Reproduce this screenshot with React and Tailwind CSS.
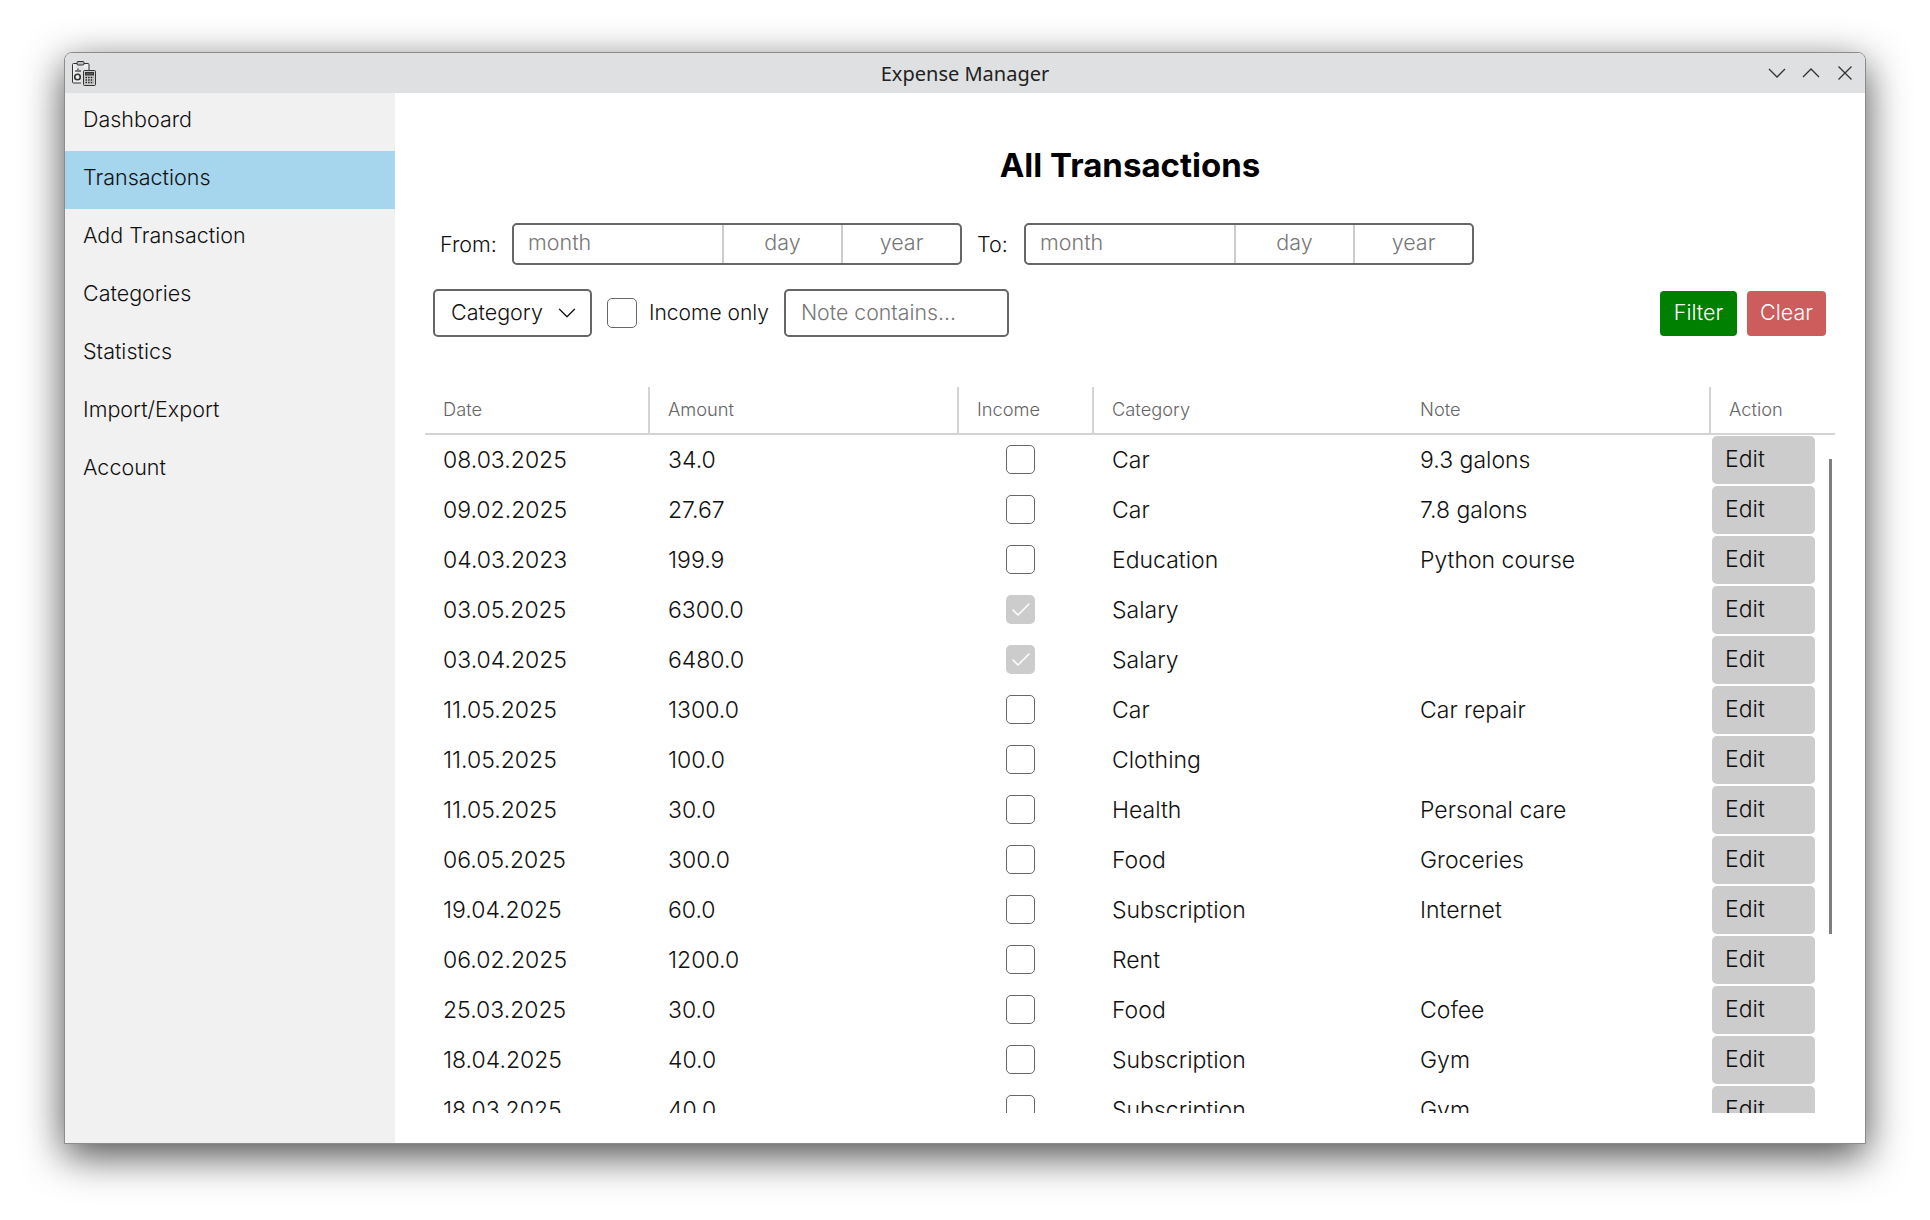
import { Check, ChevronDown } from 'lucide-react'

const navItems = ['Dashboard', 'Transactions', 'Add Transaction', 'Categories', 'Statistics', 'Import/Export', 'Account']

const rows = [
  ['08.03.2025', '34.0', false, 'Car', '9.3 galons'],
  ['09.02.2025', '27.67', false, 'Car', '7.8 galons'],
  ['04.03.2023', '199.9', false, 'Education', 'Python course'],
  ['03.05.2025', '6300.0', true, 'Salary', ''],
  ['03.04.2025', '6480.0', true, 'Salary', ''],
  ['11.05.2025', '1300.0', false, 'Car', 'Car repair'],
  ['11.05.2025', '100.0', false, 'Clothing', ''],
  ['11.05.2025', '30.0', false, 'Health', 'Personal care'],
  ['06.05.2025', '300.0', false, 'Food', 'Groceries'],
  ['19.04.2025', '60.0', false, 'Subscription', 'Internet'],
  ['06.02.2025', '1200.0', false, 'Rent', ''],
  ['25.03.2025', '30.0', false, 'Food', 'Cofee'],
  ['18.04.2025', '40.0', false, 'Subscription', 'Gym'],
  ['18.03.2025', '40.0', false, 'Subscription', 'Gym'],
]

function AppIcon() {
  return (
    <svg width="26" height="26" viewBox="0 0 26 26" fill="none" stroke="#333" strokeWidth="1">
      <path d="M4 3.500h13a1 1 0 0 1 1 1V10M10 23H2.500a1 1 0 0 1-1-1V4.500a1 1 0 0 1 1-1H4" fill="#eee" />
      <rect x="6" y="1.500" width="7" height="3.500" rx="1" fill="#bbb" />
      <path d="M5 12V10M7 12V8.500M9 12V10" strokeWidth="1.200" />
      <circle cx="6.500" cy="17" r="2.800" strokeWidth="1.600" />
      <rect x="12.500" y="10.500" width="12" height="15" rx="1" fill="#ccc" />
      <rect x="14.500" y="12.500" width="8" height="2.500" fill="#555" />
      <path d="M14.500 17.500h8M14.500 20h8M14.500 22.500h8" strokeWidth="1.500" strokeDasharray="1.500 1.100" stroke="#222" />
    </svg>
  )
}

function WinIcon({ d }) {
  return (
    <svg width="18" height="18" viewBox="0 0 18 18" fill="none" stroke="#333" strokeWidth="1.300">
      <path d={d} />
    </svg>
  )
}

function DateBox() {
  return (
    <div className="flex w-[450px] h-[42px] border-2 border-[#666] rounded-[5px] text-[21.5px] leading-[34px] text-[#777]">
      <div className="w-[210px] pl-[14px] border-r-2 border-[#ccc]">month</div>
      <div className="w-[119px] text-center border-r-2 border-[#ccc]">day</div>
      <div className="flex-1 text-center">year</div>
    </div>
  )
}

function Checkbox({ checked }) {
  if (checked) {
    return (
      <div className="w-[29px] h-[29px] rounded-[5px] bg-[#ccc] flex items-center justify-center">
        <Check size={24} strokeWidth={1.5} color="#fff" />
      </div>
    )
  }
  return <div className="w-[29px] h-[29px] rounded-[5px] border border-[#666]" />
}

const cols = 'grid grid-cols-[225px_309px_135px_308px_309px_124px]'

export default function App() {
  return (
    <div className="w-[1930px] h-[1220px] pt-[52px] pl-[64px] bg-white overflow-hidden font-['Inter',sans-serif] font-[350] text-[#111]">
      <div className="w-[1802px] h-[1092px] flex flex-col rounded-t-[8px] border border-[#8c8c8c] bg-white shadow-[0_12px_40px_rgba(0,0,0,0.7)] overflow-hidden">
        {/* Title bar */}
        <header className="relative h-[40px] shrink-0 bg-[#dee0e2] flex items-center justify-between pl-[6px] pr-[11px]">
          <AppIcon />
          <div className="absolute inset-0 pt-[2px] flex items-center justify-center font-['Noto_Sans',sans-serif] font-normal text-[20px] text-[#222]">Expense Manager</div>
          <div className="relative flex items-center gap-[16px]">
            <WinIcon d="M1 5l8 8 8-8" />
            <WinIcon d="M1 13l8-8 8 8" />
            <WinIcon d="M2.500 2.500l13 13M15.500 2.500l-13 13" />
          </div>
        </header>

        <div className="flex flex-1 min-h-0">
          {/* Sidebar */}
          <aside className="w-[330px] shrink-0 bg-[#f1f1f1]">
            {navItems.map((item) => (
              <div key={item} className={`h-[58px] pl-[18px] pb-[6px] flex items-center text-[21.5px] ${item === 'Transactions' ? 'bg-[#a6d5ee]' : ''}`}>
                {item}
              </div>
            ))}
          </aside>

          {/* Main */}
          <main className="flex-1 min-w-0 pl-[30px] pr-[30px] flex flex-col">
            <h1 className="pt-[52px] h-[130px] text-center text-[33px] leading-[40px] font-bold text-black">All Transactions</h1>

            <div className="flex items-center h-[42px] pl-[15px] text-[21.5px]">
              <span className="w-[72px]">From:</span>
              <DateBox />
              <span className="ml-[15px] w-[47px]">To:</span>
              <DateBox />
            </div>

            <div className="flex items-center h-[48px] mt-[24px] pl-[8px] text-[21px]">
              <div className="w-[159px] h-[48px] border-2 border-[#666] rounded-[5px] flex items-center justify-between pl-[16px] pr-[8px] pb-[1px] text-[21.5px]">
                <span>Category</span>
                <ChevronDown size={30} strokeWidth={1} />
              </div>
              <div className="ml-[15px] w-[30px] h-[30px] rounded-[5px] border border-[#666]" />
              <span className="ml-[12px]">Income only</span>
              <div className="ml-[15px] w-[225px] h-[48px] border-2 border-[#666] rounded-[5px] flex items-center pl-[15px] text-[21.3px] text-[#777]">Note contains...</div>
              <div className="ml-auto mr-[9px] flex gap-[10px] text-white text-[21.5px]">
                <div className="h-[45px] w-[77px] pb-[2px] rounded-[4px] bg-[#008000] flex items-center justify-center">Filter</div>
                <div className="h-[45px] w-[79px] pb-[2px] rounded-[4px] bg-[#cd5c5c] flex items-center justify-center">Clear</div>
              </div>
            </div>

            {/* Table */}
            <div className={`${cols} h-[48px] mt-[50px] border-b-2 border-[#d4d4d4] text-[18.3px] text-[#666]`}>
              <div className="pl-[18px] pb-[1px] flex items-center border-r-2 border-[#d4d4d4]">Date</div>
              <div className="pl-[18px] pb-[1px] flex items-center border-r-2 border-[#d4d4d4]">Amount</div>
              <div className="pl-[18px] pb-[1px] flex items-center border-r-2 border-[#d4d4d4]">Income</div>
              <div className="pl-[18px] pb-[1px] flex items-center">Category</div>
              <div className="pl-[18px] pb-[1px] flex items-center border-r-2 border-[#d4d4d4]">Note</div>
              <div className="pl-[18px] pb-[1px] flex items-center">Action</div>
            </div>
            <div className="relative h-[678px] overflow-hidden text-[23px]">
              {rows.map((r, i) => (
                <div key={i} className={`${cols} h-[50px] items-center`}>
                  <div className="pl-[18px]">{r[0]}</div>
                  <div className="pl-[18px]">{r[1]}</div>
                  <div className="pl-[47px] -mt-[1px]"><Checkbox checked={r[2]} /></div>
                  <div className="pl-[18px]">{r[3]}</div>
                  <div className="pl-[18px]">{r[4]}</div>
                  <div className="pl-[1px]">
                    <div className="w-[103px] h-[48px] rounded-[5px] bg-[#ccc] pl-[13px] pb-[2px] flex items-center">Edit</div>
                  </div>
                </div>
              ))}
              <div className="absolute right-[3px] top-[24px] w-[3px] h-[475px] bg-[#7f7f7f]" />
            </div>
          </main>
        </div>
      </div>
    </div>
  )
}
